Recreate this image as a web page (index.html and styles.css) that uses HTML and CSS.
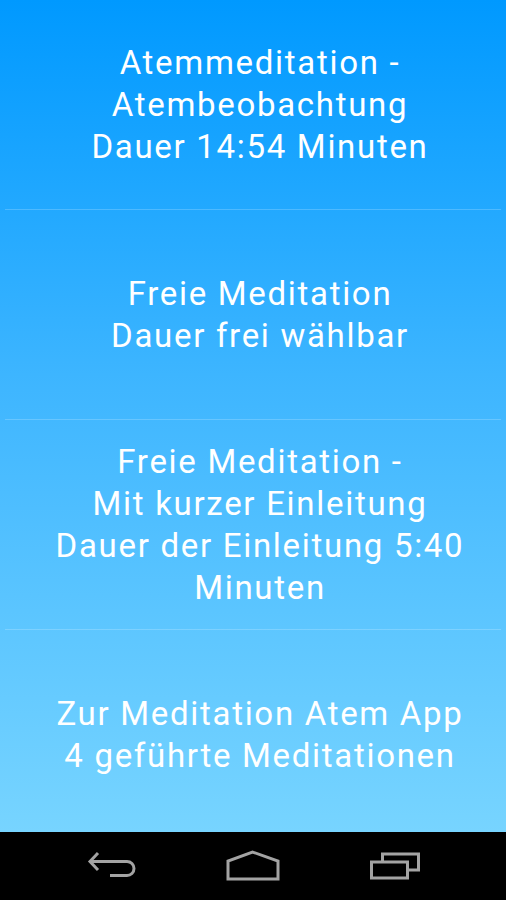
FILE: index.html
```html
<!DOCTYPE html>
<html lang="de">
  <head>
    <meta charset="utf-8" />
    <title>Meditation</title>
    <link rel="stylesheet" href="styles.css">
  </head>
  <body>
    <div class="screen">
      <ul class="menu">
        <li class="menu-item">Atemmeditation -<br>Atembeobachtung<br>Dauer 14:54 Minuten</li>
        <li class="menu-item">Freie Meditation<br>Dauer frei wählbar</li>
        <li class="menu-item">Freie Meditation -<br>Mit kurzer Einleitung<br>Dauer der Einleitung 5:40<br>Minuten</li>
        <li class="menu-item">Zur Meditation Atem App<br>4 geführte Meditationen</li>
      </ul>
    </div>

    <nav class="navbar">
      <span class="nav-slot">
        <svg class="nav-icon" width="50" height="30" viewBox="0 0 50 30">
          <path d="M11 2 L3 10.5 L11 19 M3 10.5 H40 A7 7 0 0 1 40 24.5 H23" />
        </svg>
      </span>
      <span class="nav-slot">
        <svg class="nav-icon" width="56" height="32" viewBox="0 0 56 32">
          <path d="M3 29 V11 L27.5 2 L53 11 V29 Z" />
        </svg>
      </span>
      <span class="nav-slot">
        <svg class="nav-icon" width="52" height="30" viewBox="0 0 52 30">
          <path d="M3.5 11 H39.5 V27 H3.5 Z M14.5 11 V3 H50.5 V19 H39.5" />
        </svg>
      </span>
    </nav>
  </body>
</html>
```

FILE: styles.css
```css
html, body {
  margin: 0;
  padding: 0;
}

body {
  width: 506px;
  height: 900px;
  overflow: hidden;
  font-family: Roboto, 'Noto Sans', sans-serif;
  background: #000;
}

.screen {
  height: 832px;
  overflow: hidden;
  background: linear-gradient(to bottom, #0099ff 0%, #3db5ff 45%, #77d4ff 100%);
}

.menu {
  list-style: none;
  margin: 0;
  padding: 0;
}

.menu-item {
  height: 209px;
  display: flex;
  align-items: center;
  justify-content: center;
  text-align: center;
  color: #fff;
  font-size: 33px;
  line-height: 42px;
  letter-spacing: 1.7px;
  padding-left: 14px;
  margin: 0 5px;
  border-bottom: 1px solid rgba(255, 255, 255, 0.2);
}

.navbar {
  height: 68px;
  display: flex;
  align-items: center;
  justify-content: center;
}

.nav-slot {
  width: 141px;
  display: flex;
  justify-content: center;
}

.nav-icon {
  fill: none;
  stroke: #a3a3a3;
  stroke-width: 3;
}
```
